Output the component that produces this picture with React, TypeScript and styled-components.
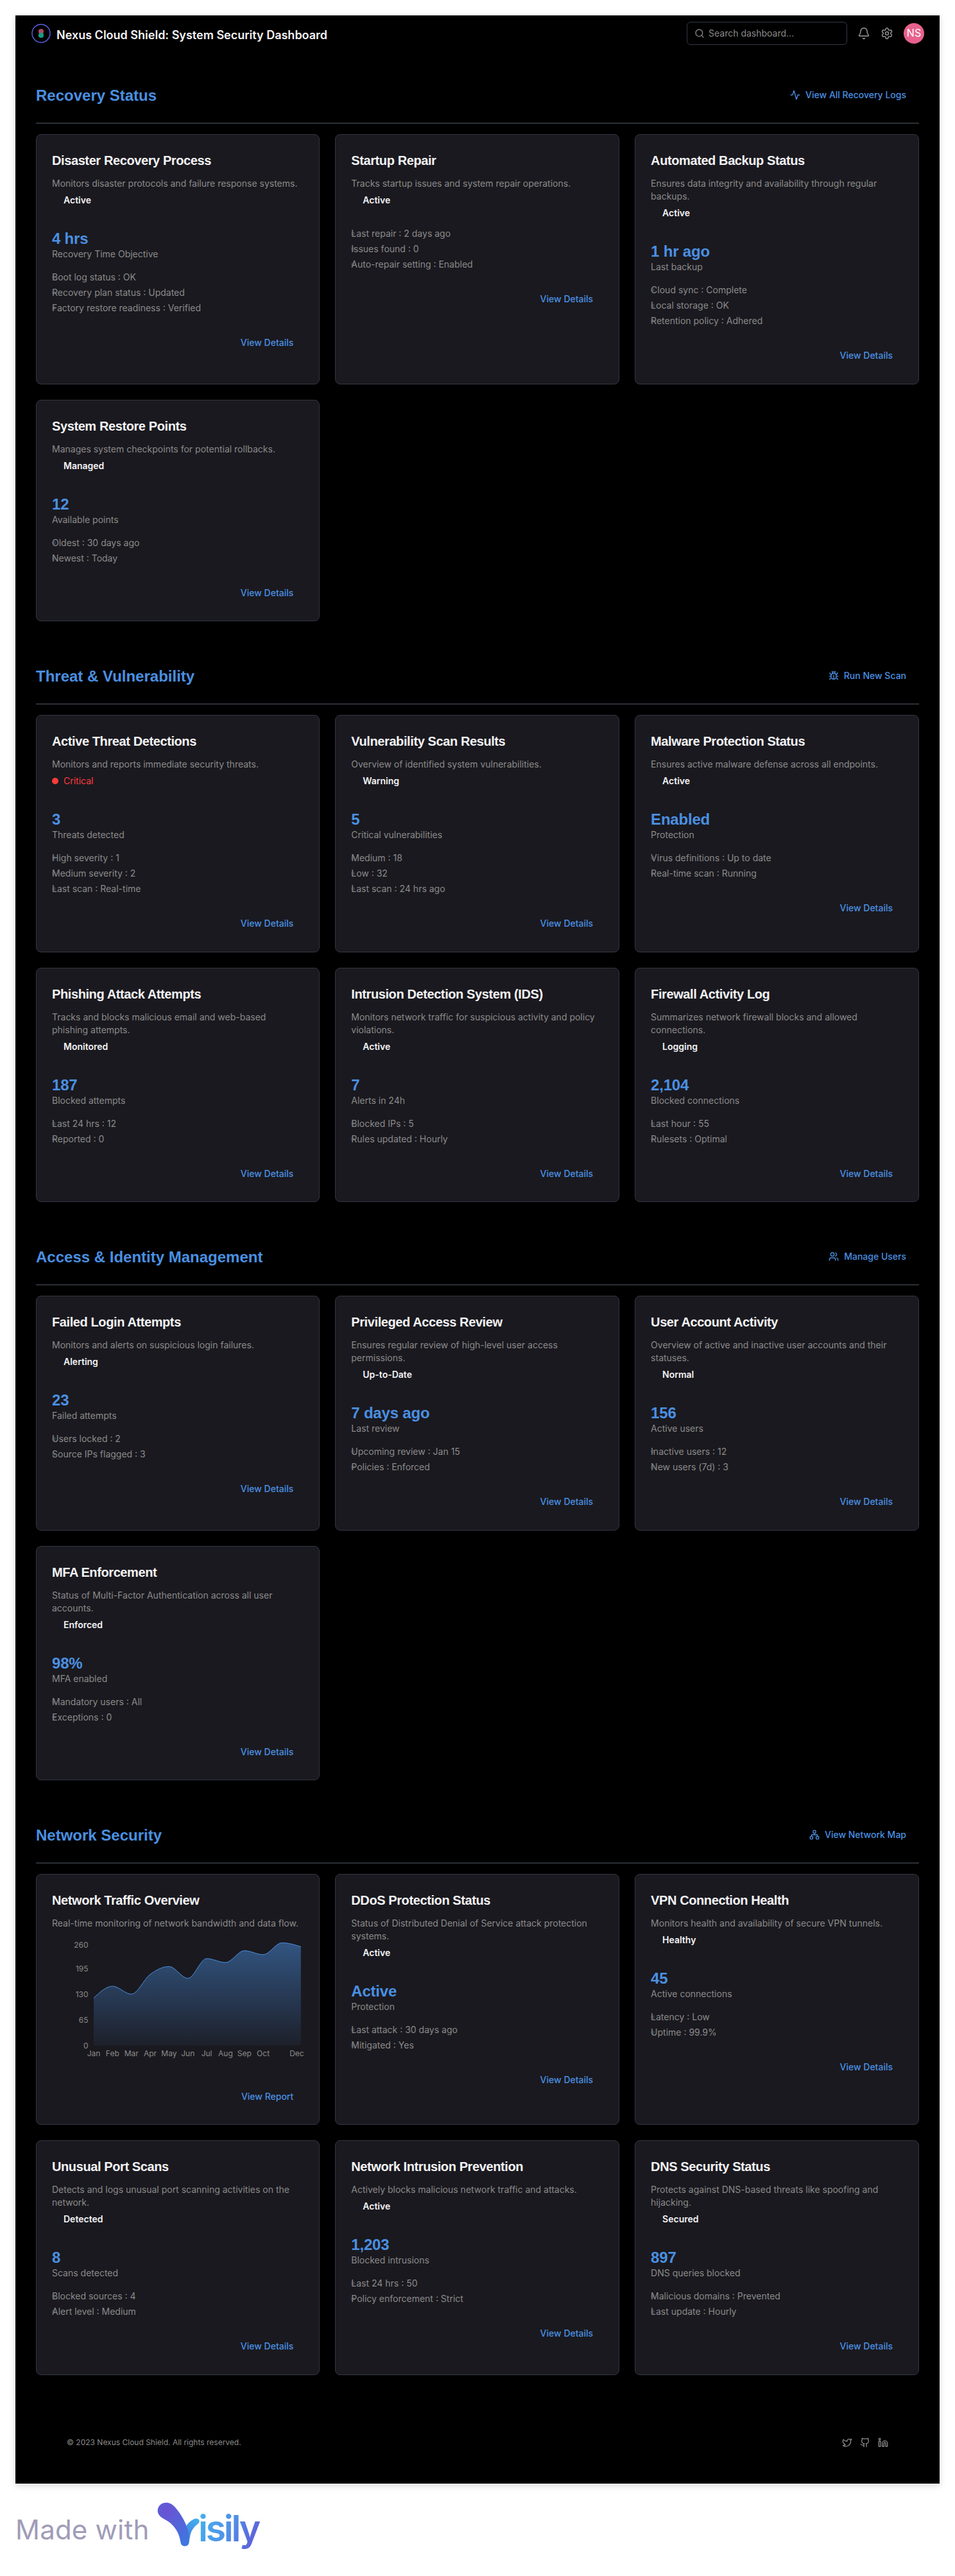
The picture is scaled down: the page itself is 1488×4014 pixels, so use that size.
import React from "react";
import styled, { createGlobalStyle } from "styled-components";
import {
  Activity,
  Bell,
  Bug,
  Github,
  Linkedin,
  Network,
  Search,
  Settings,
  Twitter,
  Users,
  type LucideIcon,
} from "lucide-react";

const color = {
  page: "#000000",
  card: "#1a191f",
  border: "#323743",
  line: "#2b2f36",
  accent: "#4a90e2",
  muted: "#8a8a8a",
  text: "#f3f3f5",
  danger: "#ff3b3b",
};

const bodyFont = `Inter, "Liberation Sans", sans-serif`;
const headFont = `"Liberation Sans", Inter, sans-serif`;

const GlobalStyle = createGlobalStyle`
  *, *::before, *::after { box-sizing: border-box; }
  body { margin: 0; background: #ffffff; font-family: ${bodyFont}; font-size: 14px; line-height: 20px; }
  h1, h2, h3, p, ul { margin: 0; padding: 0; }
  ul { list-style: none; }
  svg { display: block; flex: none; }
`;

const Canvas = styled.div`
  width: 1488px;
  height: 4014px;
  padding: 24px;
  overflow: hidden;
  background: #ffffff;
`;

const Frame = styled.div`
  display: flex;
  flex-direction: column;
  height: 3846px;
  background: ${color.page};
  box-shadow: 0 4px 10px rgba(0, 0, 0, 0.14);
`;

const TopBar = styled.header`
  display: flex;
  align-items: center;
  height: 56px;
  padding: 0 24px;
`;

const AppTitle = styled.h1`
  margin: 5px auto 0 8px;
  color: ${color.text};
  font-size: 18px;
  font-weight: 600;
  line-height: 28px;
`;

const SearchBox = styled.label`
  display: flex;
  align-items: center;
  gap: 6px;
  width: 250px;
  height: 36px;
  padding: 0 11px;
  border: 1px solid ${color.border};
  border-radius: 6px;
  color: ${color.muted};
`;

const SearchInput = styled.input`
  flex: 1;
  min-width: 0;
  padding: 0;
  border: 0;
  outline: 0;
  background: transparent;
  color: ${color.text};
  font: 400 14px/20px ${bodyFont};
  &::placeholder {
    color: ${color.muted};
    opacity: 1;
  }
`;

const Tools = styled.div`
  display: flex;
  align-items: center;
  gap: 16px;
  margin: 0 16px;
  color: ${color.muted};
`;

const Avatar = styled.div`
  display: grid;
  place-items: center;
  width: 32px;
  height: 32px;
  border-radius: 50%;
  padding-bottom: 2px;
  background: #e8618c;
  color: #ffffff;
  font-size: 16px;
`;

const Main = styled.main`
  display: flex;
  flex-direction: column;
  gap: 41.8px;
  padding: 25px 32px 0;
`;

const SectionHead = styled.div`
  display: flex;
  align-items: center;
  justify-content: space-between;
  height: 88px;
  margin-bottom: 16px;
  border-bottom: 2px solid ${color.line};
`;

const SectionTitle = styled.h2`
  padding-top: 2px;
  color: ${color.accent};
  font: 700 24px/32px ${headFont};
`;

const SectionAction = styled.button`
  display: flex;
  align-items: center;
  gap: 8px;
  padding: 0 20px;
  border: 0;
  background: none;
  color: ${color.accent};
  font: 500 14px/20px ${bodyFont};
`;

const Grid = styled.div`
  display: grid;
  grid-template-columns: 442.3px 442.8px 1fr;
  gap: 24px;
`;

const CardBox = styled.article`
  display: flex;
  flex-direction: column;
  padding: 26px 24px 33.6px;
  border: 1px solid ${color.border};
  border-radius: 8px;
  background: ${color.card};
`;

const CardTitle = styled.h3`
  color: ${color.text};
  font: 700 20px/28px ${headFont};
  letter-spacing: -0.4px;
`;

const Description = styled.p`
  margin-top: 12px;
  color: ${color.muted};
`;

const Status = styled.div<{ $critical: boolean }>`
  display: flex;
  align-items: center;
  gap: 8px;
  margin-top: 6px;
  color: ${(p) => (p.$critical ? color.danger : color.text)};
  font-weight: ${(p) => (p.$critical ? 400 : 600)};
  &::before {
    content: "";
    width: 10px;
    height: 10px;
    border-radius: 50%;
    background: ${(p) => (p.$critical ? color.danger : "transparent")};
  }
`;

const Metric = styled.div`
  margin-top: 36px;
  margin-bottom: -16px;
`;

const MetricValue = styled.div`
  color: ${color.accent};
  font: 700 24px/28px ${headFont};
  letter-spacing: -0.2px;
`;

const MetricLabel = styled.div`
  color: ${color.muted};
`;

const Facts = styled.ul`
  display: grid;
  gap: 4px;
  margin-top: 32px;
  color: ${color.muted};
`;

const Fact = styled.li`
  position: relative;
  z-index: 0;
  &::before {
    content: "";
    position: absolute;
    z-index: -1;
    left: 0;
    top: 7px;
    width: 6px;
    height: 6px;
    border-radius: 50%;
    background: ${color.border};
  }
`;

const CardAction = styled.button`
  align-self: flex-end;
  margin-top: 34px;
  padding: 0 16px;
  border: 0;
  background: none;
  color: ${color.accent};
  font: 500 14px/20px ${bodyFont};
`;

const ChartSvg = styled.svg`
  overflow: visible;
  text {
    fill: ${color.muted};
    font: 400 12px ${bodyFont};
  }
`;

const Footer = styled.footer`
  display: flex;
  align-items: center;
  justify-content: space-between;
  height: 128px;
  margin-top: auto;
  padding: 0 80px;
  color: ${color.muted};
  font-size: 12px;
`;

const Social = styled.div`
  display: flex;
  gap: 12px;
`;

const Credit = styled.div`
  display: flex;
  align-items: flex-start;
  height: 120px;
`;

const CreditText = styled.span`
  width: 218.7px;
  padding-top: 47px;
  color: #a09cb8;
  font-size: 42px;
  line-height: 50px;
  letter-spacing: 0.2px;
  white-space: nowrap;
`;

const BrandSvg = styled.svg`
  margin-top: 27.3px;
  text {
    font: 600 171px ${bodyFont};
  }
`;

interface CardData {
  title: string;
  desc: string;
  status?: string;
  critical?: boolean;
  value?: string;
  label?: string;
  facts?: string[];
  chart?: boolean;
}

interface SectionData {
  title: string;
  action: string;
  icon: LucideIcon;
  cards: CardData[];
}

const sections: SectionData[] = [
  {
    title: "Recovery Status",
    action: "View All Recovery Logs",
    icon: Activity,
    cards: [
      { title: "Disaster Recovery Process", desc: "Monitors disaster protocols and failure response systems.", status: "Active", value: "4 hrs", label: "Recovery Time Objective", facts: ["Boot log status : OK", "Recovery plan status : Updated", "Factory restore readiness : Verified"] },
      { title: "Startup Repair", desc: "Tracks startup issues and system repair operations.", status: "Active", facts: ["Last repair : 2 days ago", "Issues found : 0", "Auto-repair setting : Enabled"] },
      { title: "Automated Backup Status", desc: "Ensures data integrity and availability through regular backups.", status: "Active", value: "1 hr ago", label: "Last backup", facts: ["Cloud sync : Complete", "Local storage : OK", "Retention policy : Adhered"] },
      { title: "System Restore Points", desc: "Manages system checkpoints for potential rollbacks.", status: "Managed", value: "12", label: "Available points", facts: ["Oldest : 30 days ago", "Newest : Today"] },
    ],
  },
  {
    title: "Threat & Vulnerability",
    action: "Run New Scan",
    icon: Bug,
    cards: [
      { title: "Active Threat Detections", desc: "Monitors and reports immediate security threats.", status: "Critical", critical: true, value: "3", label: "Threats detected", facts: ["High severity : 1", "Medium severity : 2", "Last scan : Real-time"] },
      { title: "Vulnerability Scan Results", desc: "Overview of identified system vulnerabilities.", status: "Warning", value: "5", label: "Critical vulnerabilities", facts: ["Medium : 18", "Low : 32", "Last scan : 24 hrs ago"] },
      { title: "Malware Protection Status", desc: "Ensures active malware defense across all endpoints.", status: "Active", value: "Enabled", label: "Protection", facts: ["Virus definitions : Up to date", "Real-time scan : Running"] },
      { title: "Phishing Attack Attempts", desc: "Tracks and blocks malicious email and web-based phishing attempts.", status: "Monitored", value: "187", label: "Blocked attempts", facts: ["Last 24 hrs : 12", "Reported : 0"] },
      { title: "Intrusion Detection System (IDS)", desc: "Monitors network traffic for suspicious activity and policy violations.", status: "Active", value: "7", label: "Alerts in 24h", facts: ["Blocked IPs : 5", "Rules updated : Hourly"] },
      { title: "Firewall Activity Log", desc: "Summarizes network firewall blocks and allowed connections.", status: "Logging", value: "2,104", label: "Blocked connections", facts: ["Last hour : 55", "Rulesets : Optimal"] },
    ],
  },
  {
    title: "Access & Identity Management",
    action: "Manage Users",
    icon: Users,
    cards: [
      { title: "Failed Login Attempts", desc: "Monitors and alerts on suspicious login failures.", status: "Alerting", value: "23", label: "Failed attempts", facts: ["Users locked : 2", "Source IPs flagged : 3"] },
      { title: "Privileged Access Review", desc: "Ensures regular review of high-level user access permissions.", status: "Up-to-Date", value: "7 days ago", label: "Last review", facts: ["Upcoming review : Jan 15", "Policies : Enforced"] },
      { title: "User Account Activity", desc: "Overview of active and inactive user accounts and their statuses.", status: "Normal", value: "156", label: "Active users", facts: ["Inactive users : 12", "New users (7d) : 3"] },
      { title: "MFA Enforcement", desc: "Status of Multi-Factor Authentication across all user accounts.", status: "Enforced", value: "98%", label: "MFA enabled", facts: ["Mandatory users : All", "Exceptions : 0"] },
    ],
  },
  {
    title: "Network Security",
    action: "View Network Map",
    icon: Network,
    cards: [
      { title: "Network Traffic Overview", desc: "Real-time monitoring of network bandwidth and data flow.", chart: true },
      { title: "DDoS Protection Status", desc: "Status of Distributed Denial of Service attack protection systems.", status: "Active", value: "Active", label: "Protection", facts: ["Last attack : 30 days ago", "Mitigated : Yes"] },
      { title: "VPN Connection Health", desc: "Monitors health and availability of secure VPN tunnels.", status: "Healthy", value: "45", label: "Active connections", facts: ["Latency : Low", "Uptime : 99.9%"] },
      { title: "Unusual Port Scans", desc: "Detects and logs unusual port scanning activities on the network.", status: "Detected", value: "8", label: "Scans detected", facts: ["Blocked sources : 4", "Alert level : Medium"] },
      { title: "Network Intrusion Prevention", desc: "Actively blocks malicious network traffic and attacks.", status: "Active", value: "1,203", label: "Blocked intrusions", facts: ["Last 24 hrs : 50", "Policy enforcement : Strict"] },
      { title: "DNS Security Status", desc: "Protects against DNS-based threats like spoofing and hijacking.", status: "Secured", value: "897", label: "DNS queries blocked", facts: ["Malicious domains : Prevented", "Last update : Hourly"] },
    ],
  },
];

const months = ["Jan", "Feb", "Mar", "Apr", "May", "Jun", "Jul", "Aug", "Sep", "Oct", "", "Dec"];
const traffic = [120, 150, 130, 180, 200, 170, 220, 210, 240, 230, 260, 250];
const plot = { left: 65, right: 387.8, top: 20.3, bottom: 180.3, max: 260 };
const step = (plot.right - plot.left) / (traffic.length - 1);

/** Monotone cubic interpolation through evenly spaced points. */
function monotonePath(points: { x: number; y: number }[]) {
  const slopes = points.slice(1).map((p, i) => (p.y - points[i].y) / (p.x - points[i].x));
  const tangents = points.map((_, i) => {
    if (i === 0 || i === points.length - 1) return 0;
    const a = slopes[i - 1];
    const b = slopes[i];
    if (a * b <= 0) return 0;
    return Math.sign(a) * 2 * Math.min(Math.abs(a), Math.abs(b), Math.abs(a + b) / 4);
  });
  tangents[0] = (3 * slopes[0] - tangents[1]) / 2;
  const n = points.length - 1;
  tangents[n] = (3 * slopes[n - 1] - tangents[n - 1]) / 2;
  return points.slice(1).reduce((d, p, i) => {
    const q = points[i];
    const h = (p.x - q.x) / 3;
    return `${d}C${q.x + h},${q.y + h * tangents[i]} ${p.x - h},${p.y - h * tangents[i + 1]} ${p.x},${p.y}`;
  }, `M${points[0].x},${points[0].y}`);
}

function TrafficChart() {
  const scale = (v: number) => plot.bottom - (v / plot.max) * (plot.bottom - plot.top);
  const line = monotonePath(traffic.map((v, i) => ({ x: plot.left + i * step, y: scale(v) })));
  return (
    <ChartSvg width="393" height="215.8">
      <defs>
        <linearGradient id="traffic" x1="0" y1="0" x2="0" y2="1">
          <stop offset="0" stopColor={color.accent} stopOpacity="0.5" />
          <stop offset="1" stopColor={color.accent} stopOpacity="0.06" />
        </linearGradient>
      </defs>
      <path d={`${line}V${plot.bottom}H${plot.left}Z`} fill="url(#traffic)" />
      <path d={line} fill="none" stroke={color.accent} />
      {[0, 65, 130, 195, 260].map((v) => (
        <text key={v} x="56.5" y={Math.max(scale(v), 24) + 4.4} textAnchor="end">
          {v}
        </text>
      ))}
      {months.map((m, i) => (
        <text key={i} x={Math.min(plot.left + i * step, 381.4)} y="196.8" textAnchor="middle">
          {m}
        </text>
      ))}
    </ChartSvg>
  );
}

function Card({ title, desc, status, critical = false, value, label, facts, chart }: CardData) {
  return (
    <CardBox>
      <CardTitle>{title}</CardTitle>
      <Description>{desc}</Description>
      {status && <Status $critical={critical}>{status}</Status>}
      {value && (
        <Metric>
          <MetricValue>{value}</MetricValue>
          <MetricLabel>{label}</MetricLabel>
        </Metric>
      )}
      {facts && (
        <Facts>
          {facts.map((f) => (
            <Fact key={f}>{f}</Fact>
          ))}
        </Facts>
      )}
      {chart && <TrafficChart />}
      <CardAction>{chart ? "View Report" : "View Details"}</CardAction>
    </CardBox>
  );
}

function Logo() {
  return (
    <svg width="32" height="32" viewBox="0 0 32 32">
      <circle cx="16" cy="16" r="14" fill="none" stroke="#5c62e6" strokeWidth="1.4" />
      <circle cx="16" cy="13" r="4.1" fill="#a84a69" />
      <circle cx="16" cy="19" r="4.1" fill="#1c9a80" />
    </svg>
  );
}

function Brand() {
  return (
    <BrandSvg width="170" height="84" viewBox="680 52 510 252">
      <defs>
        <radialGradient id="leaf" gradientUnits="userSpaceOnUse" cx="732" cy="100" r="165">
          <stop offset="0" stopColor="#6a52d3" />
          <stop offset="1" stopColor="#3f76e0" />
        </radialGradient>
        <linearGradient id="sprout" gradientUnits="userSpaceOnUse" x1="875" y1="135" x2="825" y2="230">
          <stop offset="0" stopColor="#45b0ef" />
          <stop offset="1" stopColor="#3c80e0" />
        </linearGradient>
        <linearGradient id="word" gradientUnits="userSpaceOnUse" x1="890" y1="120" x2="1165" y2="240">
          <stop offset="0" stopColor="#45b0ef" />
          <stop offset="0.5" stopColor="#5090e6" />
          <stop offset="1" stopColor="#6059d8" />
        </linearGradient>
      </defs>
      <path d="M822 168C834 150 848 140 862 135C880 131 889 146 879 156C858 173 842 190 838 225L834 240Z" fill="url(#sprout)" />
      <path d="M727 60C745 60 757 68 768 80C800 115 828 168 834 210C837 228 836 240 834 250C829 268 801 268 796 250C792 222 784 198 766 175C750 154 734 146 713 134C697 124 688 112 688 98C688 76 705 60 727 60Z" fill="url(#leaf)" />
      <text x="878" y="241" textLength="292" fill="url(#word)">
        isily
      </text>
    </BrandSvg>
  );
}

export default function App() {
  return (
    <>
      <GlobalStyle />
      <Canvas>
        <Frame>
          <TopBar>
            <Logo />
            <AppTitle>Nexus Cloud Shield: System Security Dashboard</AppTitle>
            <SearchBox>
              <Search size={16} />
              <SearchInput placeholder="Search dashboard..." />
            </SearchBox>
            <Tools>
              <Bell size={20} />
              <Settings size={20} />
            </Tools>
            <Avatar>NS</Avatar>
          </TopBar>
          <Main>
            {sections.map(({ title, action, icon: Icon, cards }) => (
              <section key={title}>
                <SectionHead>
                  <SectionTitle>{title}</SectionTitle>
                  <SectionAction>
                    <Icon size={16} />
                    {action}
                  </SectionAction>
                </SectionHead>
                <Grid>
                  {cards.map((c) => (
                    <Card key={c.title} {...c} />
                  ))}
                </Grid>
              </section>
            ))}
          </Main>
          <Footer>
            <span>© 2023 Nexus Cloud Shield. All rights reserved.</span>
            <Social>
              <Twitter size={16} />
              <Github size={16} />
              <Linkedin size={16} />
            </Social>
          </Footer>
        </Frame>
        <Credit>
          <CreditText>Made with</CreditText>
          <Brand />
        </Credit>
      </Canvas>
    </>
  );
}
